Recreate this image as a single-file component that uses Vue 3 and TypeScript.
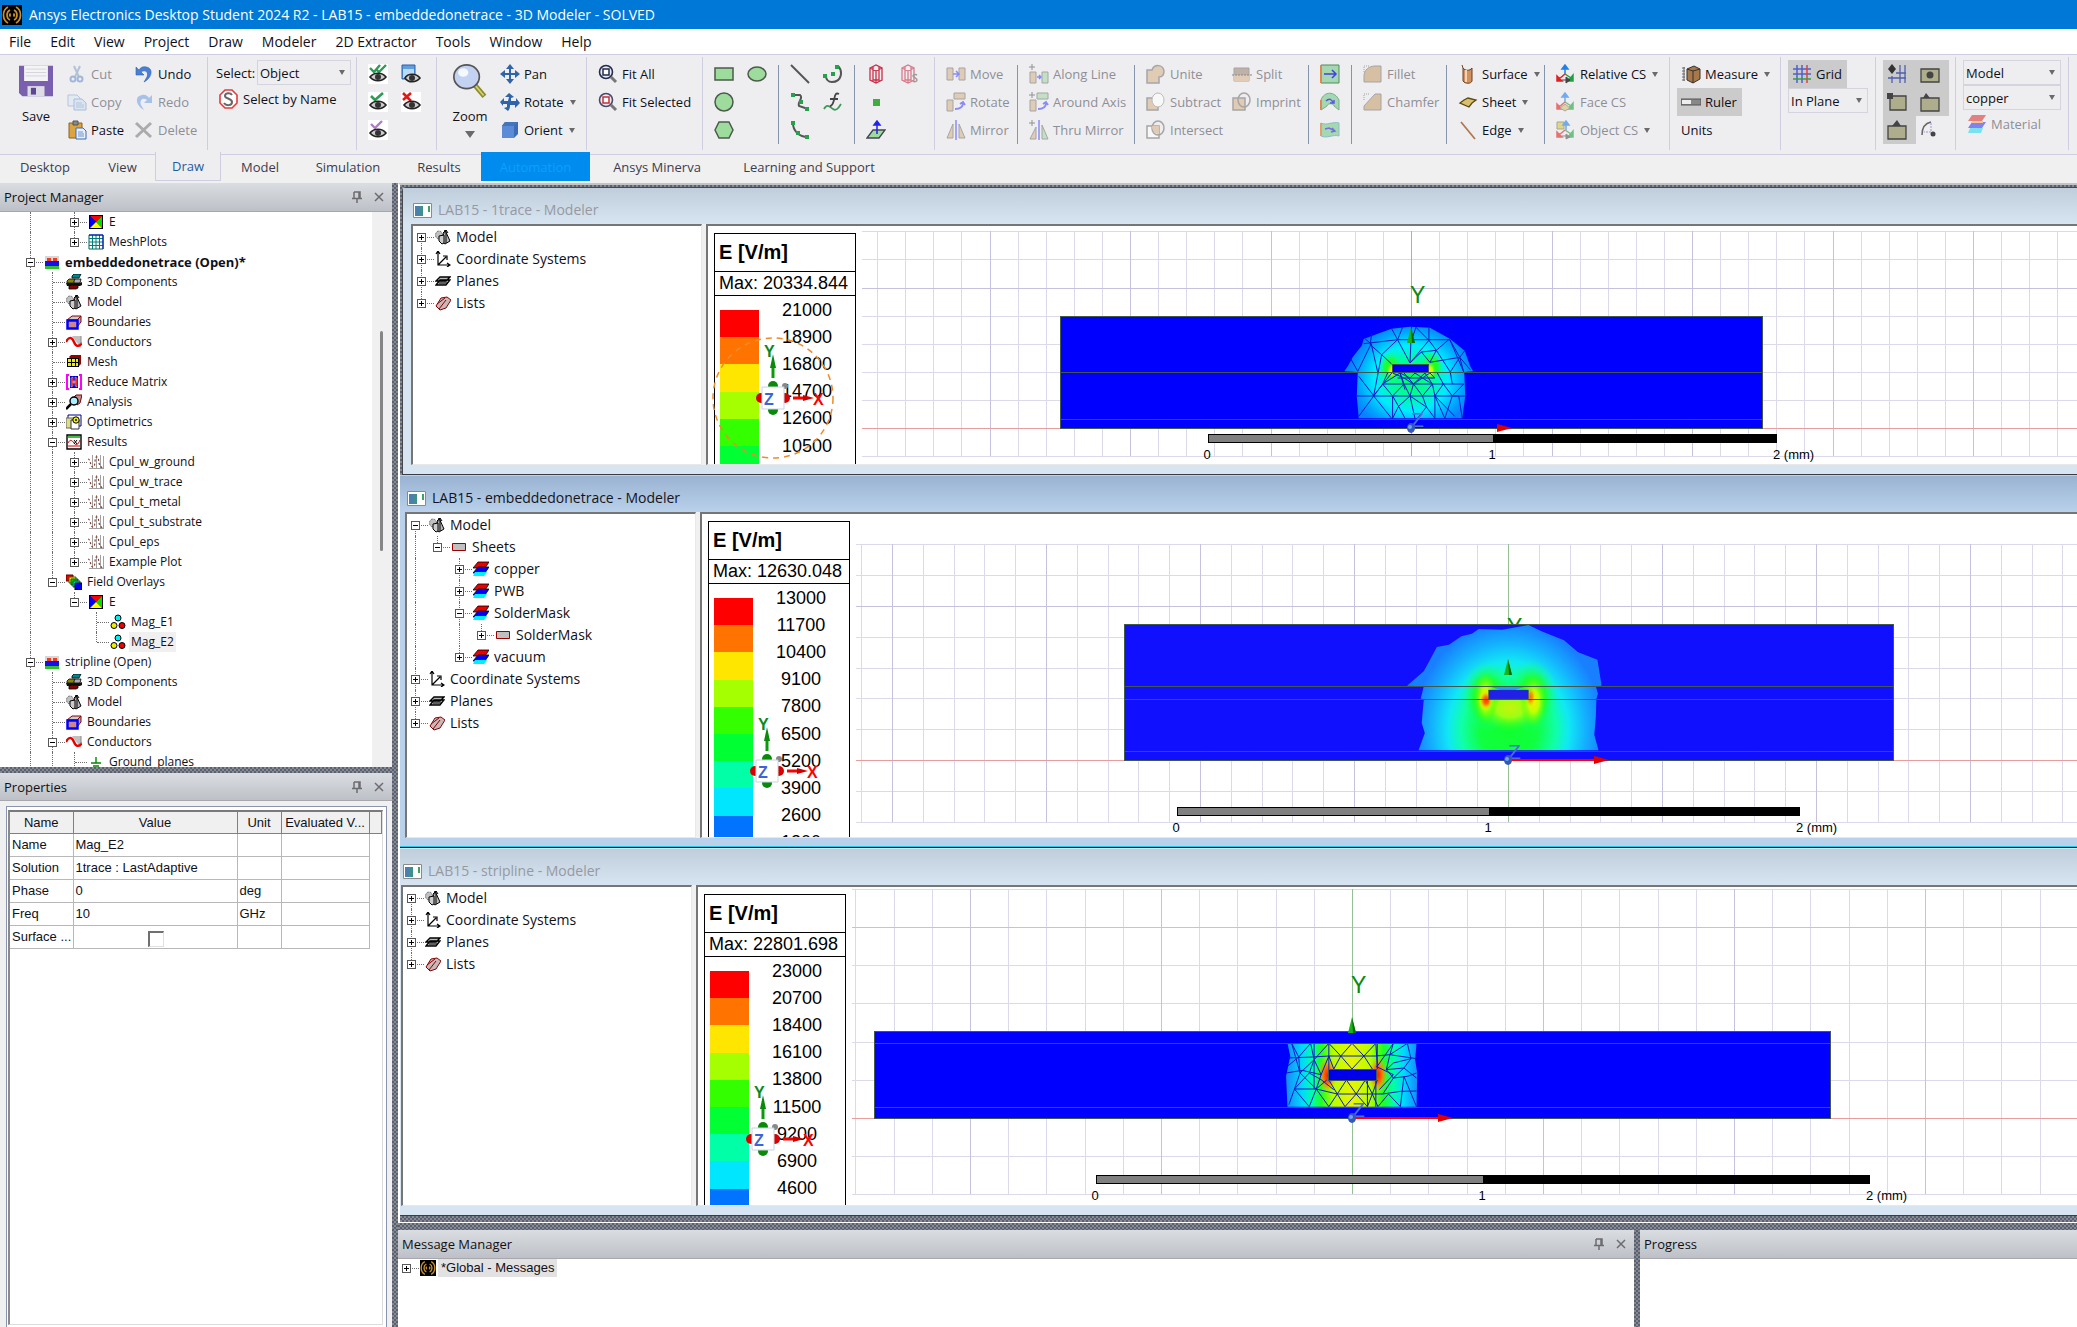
<script setup lang="ts">
type Tool = { icon: string; label?: string; off?: boolean; caret?: boolean; on?: boolean; name?: string }
type Row = { guides: string; box?: string; icon: string; label: string; bold?: boolean; sel?: boolean }
type View = {
  id: string; title: string; max: string; scale: number[]; rows: Row[]
  ox: number; oy: number; pitch: number; left: number; up: number; down: number
  ruler: number[]; rulerY: number; hover?: boolean; shaft?: boolean
}

const menus = ['File', 'Edit', 'View', 'Project', 'Draw', 'Modeler', '2D Extractor', 'Tools', 'Window', 'Help']
const tabs = [
  { label: 'Desktop', w: 90 }, { label: 'View', w: 65 }, { label: 'Draw', w: 66 }, { label: 'Model', w: 78 },
  { label: 'Simulation', w: 98 }, { label: 'Results', w: 84 }, { label: 'Automation', w: 109 },
  { label: 'Ansys Minerva', w: 134 }, { label: 'Learning and Support', w: 170 },
]

const icons: Record<string, string> = {
  save: '<path d="M0 1h20v18H2l-2-2z" fill="#7a5fae"/><path d="M3 1h14v9H3z" fill="#f4f4f6"/><path d="M4 3h12M4 5h12M4 7h12" stroke="#cfcfd6" stroke-width=".5"/><path d="M5 13h10v6H5z" fill="#dcdce4"/><path d="M7 14h3v4H7z" fill="#5d4790"/>',
  cut: '<path d="M7 2l5 11M13 2L8 13" stroke="#8ea6c8" stroke-width="2" fill="none"/><circle cx="6" cy="15" r="2.5" fill="none" stroke="#6f93cc" stroke-width="2"/><circle cx="13" cy="15" r="2.5" fill="none" stroke="#6f93cc" stroke-width="2"/>',
  copy: '<path d="M1 3h9l3 3v8H1z" fill="#dfe8f4" stroke="#8eaad0"/><path d="M7 7h8l4 4v7H7z" fill="#cfdef2" stroke="#7c9ccb"/><path d="M9 11h6M9 13h8M9 15h8" stroke="#8eaad0"/>',
  paste: '<path d="M2 3h13v15H2z" fill="#d9a441" stroke="#8c6420"/><path d="M6 1h5v4H6z" fill="#8a8a8a" stroke="#555"/><path d="M9 8h7l3 3v8H9z" fill="#e8f0fa" stroke="#3f6bb0"/><path d="M11 12h5M11 14h6M11 16h6" stroke="#6f93cc"/>',
  undo: '<path d="M2 3v8h8L7 8c4-3 8 0 6 5l-3 5c8-4 10-14 2-15C9 2 6 4 5 6z" fill="#4a80d4" stroke="#2c5eb4" stroke-width=".6"/>',
  redo: '<path d="M18 3v8h-8l3-3C9 5 5 8 7 13l3 5C2 14 0 4 8 3c3-1 6 1 7 3z" fill="#7ba4e4"/>',
  del: '<path d="M2 3l15 14M17 3L2 17" stroke="#808080" stroke-width="3"/>',
  byname: '<path d="M6 1h7l5 5v8l-5 5H6l-5-5V6z" fill="#fff" stroke="#e23c3c" stroke-width="1.6"/><path d="M13 6c-2-3-7-2-7 1s7 2 7 6-6 4-8 1" fill="none" stroke="#666" stroke-width="2"/>',
  eyeall: '<rect width="20" height="20" fill="#fff"/><path d="M2 4l4 4 6-7M8 5l3 3 7-7" fill="none" stroke="#2d9a56" stroke-width="2.4"/><path d="M2 13c4-5 12-5 16 0-4 5-12 5-16 0z" fill="#ccc" stroke="#222" stroke-width="1.600"/><circle cx="10" cy="13" r="3" fill="#333"/>',
  eyewin: '<path d="M1 1h13v14H1z" fill="#5f9fe0" stroke="#2b5ea8"/><path d="M2 5h11v9H2z" fill="#bcd9f6"/><path d="M4 14c3-5 11-5 15 0-4 5-12 5-15 0z" fill="#ccc" stroke="#222" stroke-width="1.600"/><circle cx="11" cy="14" r="3" fill="#333"/>',
  eyeon: '<rect width="20" height="20" fill="#fff"/><path d="M3 4l4 4 8-7" fill="none" stroke="#2d9a56" stroke-width="2.6"/><path d="M2 13c4-5 12-5 16 0-4 5-12 5-16 0z" fill="#ccc" stroke="#222" stroke-width="1.600"/><circle cx="10" cy="13" r="3" fill="#333"/>',
  eyeoff: '<rect width="20" height="20" fill="#fff"/><path d="M2 1l8 8M10 1L2 8" fill="none" stroke="#e01818" stroke-width="2.6"/><path d="M3 13c4-5 12-5 16 0-4 5-12 5-16 0z" fill="#ccc" stroke="#222" stroke-width="1.600"/><circle cx="11" cy="13" r="3" fill="#333"/>',
  eyetmp: '<rect width="20" height="20" fill="#fff"/><path d="M3 4l4 4 7-7" fill="none" stroke="#b07cc8" stroke-width="2.4"/><path d="M2 13c4-5 12-5 16 0-4 5-12 5-16 0z" fill="#ccc" stroke="#222" stroke-width="1.600"/><circle cx="10" cy="13" r="3" fill="#333"/>',
  zoom: '<path d="M12.5 12l6 7" stroke="#8c8a30" stroke-width="3"/><path d="M13 12.500l5 6" stroke="#d8d470" stroke-width="1"/><ellipse cx="8" cy="7.500" rx="7.500" ry="7" fill="#c4d2f2" stroke="#555" stroke-width="1"/><ellipse cx="6" cy="5" rx="3" ry="2.500" fill="#f4f8ff"/>',
  pan: '<path d="M10 0l4 5h-3v4h4V6l5 4-5 4v-3h-4v4h3l-4 5-4-5h3v-4H5v3l-5-4 5-4v3h4V5H6z" fill="#2f64a8"/>',
  rotate: '<path d="M9 1l5 4-3 1v3l5 0V6l4 5-5 5v-3h-5c0 2 0 4-2 6l-4-3 3-1 0-3H3v2l-3-4 4-4v3h4l1-4-4 0z" fill="#2f64a8"/>',
  orient: '<path d="M2 6l3-4h13v12l-4 4H2z" fill="#3c6cb8"/><path d="M2 6h12v12H2z" fill="#5b8ad6"/><path d="M2 6l3-4h13l-4 4z" fill="#4474bc"/>',
  fitall: '<circle cx="8" cy="8" r="6.500" fill="#e8ecf8" stroke="#222b4a" stroke-width="1.600"/><rect x="5" y="5" width="6" height="6" fill="#fff" stroke="#222b4a" stroke-width="1.500"/><path d="M13 13l5 5" stroke="#777" stroke-width="3"/>',
  fitsel: '<circle cx="8" cy="8" r="6.500" fill="#f8e8e8" stroke="#444b6a" stroke-width="1.600"/><rect x="5" y="5" width="6" height="6" fill="#fff" stroke="#c03040" stroke-width="1.500"/><path d="M13 13l5 5" stroke="#777" stroke-width="3"/>',
  rect: '<rect x="1" y="4" width="18" height="12" fill="#9edc9e" stroke="#4c5a4c" stroke-width="1.500"/>',
  ellipse: '<ellipse cx="10" cy="10" rx="9" ry="7" fill="#9edc9e" stroke="#4c5a4c" stroke-width="1.500"/>',
  circle: '<circle cx="10" cy="10" r="9" fill="#9edc9e" stroke="#4c5a4c" stroke-width="1.500"/>',
  hexagon: '<path d="M5 2h10l4 8-4 8H5L1 10z" fill="#9edc9e" stroke="#4c5a4c" stroke-width="1.500"/>',
  line: '<path d="M1 1l18 18" stroke="#555" stroke-width="2"/>',
  arc: '<path d="M15 2c5 5 4 16-6 16-4 0-6-3-6-6" fill="none" stroke="#555" stroke-width="2"/><path d="M8 8h4v4H8zM12 1h4v4h-4zM0 10h4v4H0z" fill="#25a04c"/>',
  spline: '<path d="M3 3h7c4 3-3 7-1 11l9 3" fill="none" stroke="#555" stroke-width="2"/><path d="M1 1h4v4H1zM9 8h4v4H9zM15 15h4v4h-4z" fill="#25a04c"/>',
  eqn: '<path d="M1 17c3-6 6-2 9 0s5 0 8-5" fill="none" stroke="#3f9a5a" stroke-width="1.800"/><path d="M16 2c-4-2-4 2-5 6s-2 6-4 6M7 7h8" fill="none" stroke="#444" stroke-width="1.800"/>',
  arc3: '<path d="M3 3c0 8 6 14 15 14" fill="none" stroke="#555" stroke-width="2"/><path d="M1 1h4v4H1zM6 11h4v4H6zM15 15h4v4h-4z" fill="#25a04c"/>',
  prism: '<path d="M4 4l6-3 6 3v12l-6 3-6-3zM4 4l6 3 6-3M10 7v12M7 2v14h6V2" fill="none" stroke="#c83048" stroke-width="1.300"/>',
  prisms: '<path d="M3 4l6-3 6 3v12l-6 3-6-3zM3 4l6 3 6-3M9 7v12M6 2v14h6V2" fill="none" stroke="#c83048" stroke-width="1.300"/><path d="M18 11c-2-1-4 0-4 1s4 2 4 4-3 2-4 1" fill="none" stroke="#666" stroke-width="1.500"/>',
  point: '<path d="M7 7h7v7H7z" fill="#3fae3f"/>',
  plane: '<path d="M1 18l6-8h12l-6 8z" fill="#9edc9e" stroke="#445" stroke-width="1.300"/><path d="M11 14V3M8 5l3-4 3 4z" stroke="#2222ee" stroke-width="1.500" fill="#2222ee"/>',
  move: '<path d="M1 4h6v12H1zM13 4h6v12h-6z" fill="#d8b48c" stroke="#777"/><path d="M7 10h5M10 7l3 3-3 3" stroke="#4848ff" fill="none" stroke-width="1.500"/>',
  rot: '<path d="M1 8h6v11H1zM8 1h11v6H8z" fill="#d8b48c" stroke="#777"/><path d="M9 17c6 0 8-3 8-6M14 12l3-2 2 3" stroke="#4848ff" fill="none" stroke-width="1.800"/>',
  mirror: '<path d="M1 18L7 4v14zM19 18L13 4v14z" fill="#d8b48c" stroke="#777"/><path d="M10 0v20" stroke="#4848ff" stroke-width="1.500"/>',
  along: '<path d="M1 8h6v11H1z" fill="#d8b48c" stroke="#777"/><path d="M13 8h6v11h-6z" fill="#a5d8a5" stroke="#777"/><path d="M8 13h4M10 11l2 2-2 2" stroke="#4848ff" fill="none" stroke-width="1.500"/><path d="M0 3h6M3 0v6" stroke="#555"/>',
  around: '<path d="M1 8h6v11H1z" fill="#d8b48c" stroke="#777"/><path d="M8 1h11v6H8z" fill="#a5d8a5" stroke="#777"/><path d="M9 17c6 0 8-3 8-6M14 12l3-2 2 3" stroke="#4848ff" fill="none" stroke-width="1.800"/><path d="M0 3h6M3 0v6" stroke="#555"/>',
  thru: '<path d="M1 19L7 7v12z" fill="#d8b48c" stroke="#777"/><path d="M19 19L13 5v14z" fill="#a5d8a5" stroke="#777"/><path d="M10 0v20" stroke="#4848ff" stroke-width="1.500"/><path d="M0 3h6M3 0v6" stroke="#555"/>',
  unite: '<path d="M1 6h5c2-6 11-6 12 1 0 4-2 6-5 6v6H1z" fill="#d8b48c" stroke="#777" stroke-width="1.500"/>',
  subtract: '<path d="M1 6h11v12H1z" fill="#d8b48c" stroke="#777" stroke-width="1.500"/><ellipse cx="12" cy="8" rx="6" ry="7" fill="#fff" stroke="#999"/>',
  intersect: '<path d="M1 6h12v12H1z" fill="#fff" stroke="#777" stroke-width="1.500"/><ellipse cx="12" cy="8" rx="6" ry="7" fill="none" stroke="#777" stroke-width="1.500"/><path d="M6 6h7v8c-5 0-7-4-7-8z" fill="#d8b48c"/>',
  split: '<path d="M2 4h15v13H2z" fill="#a08878" stroke="#777"/><path d="M2 11h15v6H2z" fill="#d8b48c"/><path d="M0 11h20" stroke="#444" stroke-dasharray="2 1"/>',
  imprint: '<path d="M1 6h12v12H1z" fill="#d8b48c" stroke="#777" stroke-width="1.500"/><ellipse cx="12" cy="8" rx="6" ry="7" fill="none" stroke="#777" stroke-width="1.500"/>',
  sweep1: '<path d="M1 1h18v18H1z" fill="#a5d8b0" stroke="#4c8c5c"/><path d="M1 1v18" stroke="#e08850" stroke-width="2"/><path d="M4 10h11M12 6l4 4-4 4" stroke="#4040e0" fill="none" stroke-width="1.500"/>',
  sweep2: '<path d="M1 18V8c3-9 14-9 18 0v10l-5-4c0-3-7-3-7 0z" fill="#a5d8b0" stroke="#7cac8c"/><path d="M1 18V8" stroke="#e08850" stroke-width="2"/><path d="M6 9c3-3 6-2 7 2M10 11h4V8" stroke="#5858e0" fill="none" stroke-width="1.500"/>',
  sweep3: '<path d="M1 3c6 3 12-2 18 0v13c-6-2-12 3-18 0z" fill="#a5d8b0" stroke="#8cbccc"/><path d="M1 3v13" stroke="#e0a070" stroke-width="2"/><path d="M5 9l4-1 6 3M12 8l3 3-4 1" stroke="#7070e0" fill="none" stroke-width="1.500"/>',
  fillet: '<path d="M1 18V12C1 6 6 2 12 2h6v16z" fill="#c8a070" stroke="#777"/><path d="M1 8V2h6" stroke="#777" fill="none" stroke-dasharray="1 1"/>',
  chamfer: '<path d="M1 18V14L12 2h6v16z" fill="#c8a070" stroke="#777"/><path d="M1 8V2h6" stroke="#777" fill="none" stroke-dasharray="1 1"/>',
  surface: '<path d="M5 4l-1-3M5 4v13c2 3 8 3 9 0V4c-2 3-7 3-9 0z" fill="#d09060" stroke="#6a4020"/><path d="M8 6v12" stroke="#f4d4b4" stroke-width="2"/>',
  sheet: '<path d="M2 11l4-3 4-2 8 2-4 3-3 4z" fill="#d8c070" stroke="#5a4a10" stroke-width="1.300"/>',
  edge: '<path d="M3 2l14 17" stroke="#b07850" stroke-width="1.800"/>',
  cs: '<path d="M9 10V3M6 5l3-4 3 4z" stroke="#2080e8" fill="#2080e8" stroke-width="1.500"/><path d="M9 10l-6 5M1 12v5h5z" stroke="#e02020" fill="#e02020" stroke-width="1.500"/><path d="M9 10l6 4M17 11v6h-5z" stroke="#20a040" fill="#20a040" stroke-width="1.500"/><path d="M6 16h6M10 13l4 3-4 3z" stroke="#444" fill="#444"/>',
  facecs: '<path d="M9 10V3M6 5l3-4 3 4z" stroke="#2080e8" fill="#2080e8" stroke-width="1.500"/><path d="M9 10l-6 5M1 12v5h5z" stroke="#e02020" fill="#e02020" stroke-width="1.500"/><path d="M9 10l6 4M17 11v6h-5z" stroke="#20a040" fill="#20a040" stroke-width="1.500"/><path d="M4 16l5-4 5 4-5 3z" fill="#d8c070" stroke="#776"/>',
  objcs: '<path d="M1 2h7v7H1z" fill="#d8c840" stroke="#776"/><path d="M10 10V3M7 5l3-4 3 4z" stroke="#2080e8" fill="#2080e8" stroke-width="1.500"/><path d="M9 10l-6 5M1 12v5h5z" stroke="#e02020" fill="#e02020" stroke-width="1.500"/><path d="M9 10l6 4M17 11v6h-5z" stroke="#20a040" fill="#20a040" stroke-width="1.500"/><path d="M6 16h6M10 14l4 3-4 2z" stroke="#555" fill="#555"/>',
  measure: '<path d="M6 5l7-3 6 3v10l-7 4-6-3z" fill="#a87848" stroke="#333"/><path d="M6 5l6 2 7-2M12 7v12" stroke="#333" fill="none"/><path d="M3 3v14M1 4h3M1 7h3M1 10h3M1 13h3M1 16h3" stroke="#666"/>',
  ruler: '<path d="M0 7h20v6H0z" fill="#888" stroke="#555"/><path d="M1 8h9v4H1z" fill="#eee"/>',
  grid: '<path d="M5 1v18M10 1v18M1 5h18M1 10h18" stroke="#5060d0" stroke-width="1.500"/><path d="M15 1v18" stroke="#e04040" stroke-width="1.500"/><path d="M1 15h18" stroke="#30a040" stroke-width="1.500"/>',
  snapgrid: '<path d="M13 1v18M18 1v18M1 14h18M9 9h10M5 12v7" stroke="#5060b0" stroke-width="1.300" fill="none"/><path d="M5 0l4 5-4 5-4-5z" fill="#333"/>',
  snapc: '<path d="M1 5h18v13H1z" fill="#aeae8c" stroke="#444" stroke-width="1.300"/><circle cx="10" cy="11" r="3.500" fill="#444"/>',
  snapv: '<path d="M3 4h16v14H3z" fill="#aeae8c" stroke="#444" stroke-width="1.300"/><path d="M0 1h6v6H0z" fill="#444"/>',
  snape: '<path d="M1 6h18v13H1z" fill="#aeae8c" stroke="#444" stroke-width="1.300"/><path d="M3 6l3-5 4 5z" fill="#444"/>',
  snapm: '<path d="M1 6h18v13H1z" fill="#aeae8c" stroke="#444" stroke-width="1.300"/><path d="M5 6l5-6 4 6z" fill="#444"/>',
  snapq: '<path d="M2 15C2 7 6 3 11 2" fill="none" stroke="#666" stroke-width="1.500"/><path d="M11 3v9H4" fill="none" stroke="#99c" stroke-dasharray="2 1"/><circle cx="13" cy="14" r="2.500" fill="#444"/>',
  material: '<path d="M5 1h14l-4 6H1z" fill="#e03838"/><path d="M5 8h14l-4 6H1z" fill="#3a3af0"/><path d="M3 14h13l-2 5H1z" fill="#30d8f0"/><path d="M5 8h11" stroke="#e8b060" stroke-width="2"/>',
  app: '<rect width="20" height="20" fill="#000"/><path d="M6 2C0 5 0 15 6 18M8 5C4 7 4 13 8 15M8.500 8.500c-1 1-1 2 0 3M14 2c6 3 6 13 0 16M12 5c4 2 4 8 0 10M11.500 8.500c1 1 1 2 0 3" fill="none" stroke="#c8902c" stroke-width="1.700"/>',
  // 16-unit tree glyphs
  tE: '<path d="M1 1h14v14H1z" fill="#000"/><path d="M2 2h12L8 8z" fill="#f00"/><path d="M2 2v12l6-6z" fill="#00f"/><path d="M14 2v12L8 8z" fill="#0d0"/><path d="M2 14h12L8 8z" fill="#ff0"/>',
  tMesh: '<path d="M1 1h14v14H1z" fill="#fff" stroke="#006060"/><path d="M4.500 1v14M8 1v14M11.500 1v14M1 4.500h14M1 8h14M1 11.500h14" stroke="#007c7c"/><path d="M1 1h14v14" fill="none" stroke="#00c"/>',
  tDesign: '<path d="M1 2h14v12H1z" fill="#d8d8d8"/><path d="M3 4h4v4H3zM9 4h4v4H9z" fill="#f43c1c"/><path d="M1 7h14v5H1z" fill="#1010f0"/><path d="M1 12h14v3H1z" fill="#30c030"/>',
  tComp: '<path d="M6 2l2-2h7l-2 4H6z" fill="#088" stroke="#000" stroke-width=".8"/><path d="M1 7l2-2h6v4H1z" fill="#880" stroke="#000" stroke-width=".8"/><path d="M8 7l1-2h6l-1 4H8z" fill="#aaa" stroke="#000" stroke-width=".8"/><path d="M0 9h14l2-1v3l-2 1H1z" fill="#111"/><path d="M3 12l2-1h7v3l-2 1H3z" fill="#800" stroke="#000" stroke-width=".8"/>',
  tModel: '<ellipse cx="4" cy="6" rx="3.500" ry="4" fill="#c0c0c0" stroke="#555" stroke-width=".8" stroke-dasharray="2 1"/><path d="M10 1l5 11-5 3-4-3z" fill="#b8b8b8" stroke="#000" stroke-width="1"/><path d="M4 7l5-1v8l-2 1-3-3z" fill="#ccc" stroke="#000"/><path d="M11 1v13M8 4l3-3 2 3" stroke="#000" fill="none"/>',
  tBound: '<path d="M1 6l5-4h9l-4 4z" fill="#ccc" stroke="#800"/><path d="M11 6l4-4v6l-4 5z" fill="#aaa" stroke="#800"/><path d="M1.500 6.500h10v8h-10z" fill="#c88" stroke="#00f" stroke-width="2.500"/>',
  tCond: '<path d="M6 2h9v12z" fill="#c0c0c0"/><path d="M0 8c3-6 6-5 8 0s5 5 8 1" fill="none" stroke="#e80000" stroke-width="2.400"/><path d="M15 2v8" stroke="#888"/>',
  tMeshOp: '<path d="M3 3l2-2h10v9l-3 3z" fill="#900"/><path d="M1 4h12v9H1z" fill="#000"/><path d="M2 5h3v3H2zM6 5h3v3H6zM10 5h2v3h-2zM2 9h3v3H2zM6 9h3v3H6zM10 9h2v3h-2z" fill="#ee0"/>',
  tReduce: '<path d="M3 1H1v14h2M13 1h2v14h-2" fill="none" stroke="#f0f" stroke-width="2"/><path d="M4 2h8v12H4z" fill="#00c"/><path d="M5 4l2-1v9l-2 1zM11 4L9 3v9l2 1zM7 7h2v2H7z" fill="#e00" stroke="#fff" stroke-width=".4"/>',
  tAnalysis: '<path d="M7 4l3-3h6l-2 8-3 2z" fill="#c89090" stroke="#700"/><circle cx="8" cy="7" r="4" fill="#aef" stroke="#000" stroke-width="1.400"/><path d="M5 10l-5 5" stroke="#000" stroke-width="2.500"/>',
  tOpti: '<path d="M2 1h13v11H2z" fill="#fff" stroke="#008"/><path d="M0 4h8v10H0z" fill="#dd8" stroke="#666"/><path d="M5 6h8v9H5z" fill="#fff" stroke="#333"/><circle cx="10" cy="6" r="3.200" fill="#ee0" stroke="#000"/><circle cx="10" cy="6" r="1" fill="#000"/>',
  tResult: '<path d="M1 1h14v14H1z" fill="#fff" stroke="#000" stroke-width="1.400"/><path d="M2 3h12" stroke="#0a0" stroke-width="1.500"/><path d="M2 9c2-4 4-3 6 0s4 2 6-3M2 12h12" fill="none" stroke="#c00"/><path d="M8 6l3 4M11 6L8 10" stroke="#000"/>',
  tPlot: '<path d="M4.500 1v14M8.500 1v14M12.500 1v14M15.500 2v13M1 14.500h14" stroke="#a0a0a0"/><path d="M0 5c3 0 2 8 5 8s1-11 4-10 0 9 6 11" fill="none" stroke="#884030" stroke-width="1.200" stroke-dasharray="2 2"/>',
  tField: '<path d="M0 1h7v6H0z" fill="#e00" stroke="#600"/><path d="M3 3h7v6H3z" fill="#ee0" stroke="#550"/><path d="M5 5h7v6H5z" fill="#0c0" stroke="#050"/><path d="M7 7h7v6H7z" fill="#0cc" stroke="#055"/><path d="M9 9h7v7H9z" fill="#00e" stroke="#000"/>',
  tMag: '<circle cx="8" cy="4" r="3" fill="#0ee" stroke="#000"/><circle cx="4" cy="11.500" r="3" fill="#ee0" stroke="#000"/><circle cx="12" cy="11.500" r="3" fill="#e00" stroke="#000"/>',
  tGround: '<path d="M8 3v6M3 9h10M5 12h6M7 15h2" stroke="#080" stroke-width="1.400" fill="none"/>',
  tSheet: '<path d="M1.500 4.500h13v7h-13z" fill="#c0c0c0" stroke="#900"/>',
  tMat: '<path d="M5 1h11l-4 6H0z" fill="#e00" stroke="#000" stroke-width=".8"/><path d="M5 6h11l-4 6H0z" fill="#00f" stroke="#000" stroke-width=".8"/><path d="M2 11h12l-3 4H0z" fill="#0ef"/>',
  tCoord: '<path d="M3 1v13h11M3 14l8-8M1 3l2-3 2 3M12 12l3 2-3 2M8 5h4v4" fill="none" stroke="#000" stroke-width="1.200"/>',
  tPlane: '<path d="M1 8l4-4h10l-4 4zM1 12l4-5h10l-4 5z" fill="#bbb" stroke="#000" stroke-width="1.300"/><path d="M4 10h9" stroke="#000"/>',
  tList: '<path d="M1 11l5-8 6-1 4 3-5 8-6 2z" fill="#c8b8b8" stroke="#800"/><path d="M4 14l7-9M2 9l8-6" stroke="#800" fill="none"/>',
}

type Col = { sep?: string; size: string; tools: Tool[] }
const t = (icon: string, label?: string, extra: Partial<Tool> = {}): Tool => ({ icon, label, ...extra })
const off = { off: true }
const drop = { caret: true }
const colsEdit: Col[] = [
  { size: 'w67', tools: [t('cut', 'Cut', off), t('copy', 'Copy', off), t('paste', 'Paste')] },
  { size: 'w73', tools: [t('undo', 'Undo'), t('redo', 'Redo', off), t('del', 'Delete', off)] },
]
const colsView: Col[] = [
  { size: 'w86', tools: [t('pan', 'Pan'), t('rotate', 'Rotate', drop), t('orient', 'Orient', drop)] },
  { sep: 'light', size: 'w116', tools: [t('fitall', 'Fit All'), t('fitsel', 'Fit Selected')] },
]
const pads = [
  { sep: 'light', size: 'w76', tools: ['rect', 'ellipse', 'circle', '', 'hexagon'] },
  { sep: 'dark', size: 'w76', tools: ['line', 'arc', 'spline', 'eqn', 'arc3'] },
  { sep: 'dark', size: 'w80', tools: ['prism', 'prisms', 'point', '', 'plane'] },
]
const colsModel: Col[] = [
  { sep: 'light', size: 'w83', tools: [t('move', 'Move', off), t('rot', 'Rotate', off), t('mirror', 'Mirror', off)] },
  { sep: 'dark', size: 'w117', tools: [t('along', 'Along Line', off), t('around', 'Around Axis', off), t('thru', 'Thru Mirror', off)] },
  { sep: 'dark', size: 'w98', tools: [t('unite', 'Unite', off), t('subtract', 'Subtract', off), t('intersect', 'Intersect', off)] },
  { size: 'w76', tools: [t('split', 'Split', off), t('imprint', 'Imprint', off)] },
  { sep: 'dark', size: 'w43', tools: [t('sweep1', '', { name: 'Sweep along vector' }), t('sweep2', '', { name: 'Sweep around axis' }), t('sweep3', '', { name: 'Sweep along path' })] },
  { sep: 'dark', size: 'w95', tools: [t('fillet', 'Fillet', off), t('chamfer', 'Chamfer', off)] },
  { sep: 'dark', size: 'w98', tools: [t('surface', 'Surface', drop), t('sheet', 'Sheet', drop), t('edge', 'Edge', drop)] },
  { sep: 'dark', size: 'w125', tools: [t('cs', 'Relative CS', drop), t('facecs', 'Face CS', off), t('objcs', 'Object CS', { off: true, caret: true })] },
  { sep: 'light', size: 'w111', tools: [t('measure', 'Measure', drop), t('ruler', 'Ruler', { on: true }), t('', 'Units')] },
]
const snaps = [['snapgrid', 1], ['snapc', 1], ['snapv', 1], ['snape', 1], ['snapm', 1], ['snapq', 0]] as [string, number][]

const r = (guides: string, box: string, icon: string, label: string, extra: Partial<Row> = {}): Row => ({ guides, box, icon, label, ...extra })
// guides: one letter per level. f = full line, h = upper half, b = lower half, n = none
const project: Row[] = [
  r('fnf', '+', 'tE', 'E'), r('fnh', '+', 'tMesh', 'MeshPlots'),
  r('f', '-', 'tDesign', 'embeddedonetrace (Open)*', { bold: true }),
  r('ff', '', 'tComp', '3D Components'), r('ff', '', 'tModel', 'Model'), r('ff', '', 'tBound', 'Boundaries'),
  r('ff', '+', 'tCond', 'Conductors'), r('ff', '', 'tMeshOp', 'Mesh'), r('ff', '+', 'tReduce', 'Reduce Matrix'),
  r('ff', '+', 'tAnalysis', 'Analysis'), r('ff', '+', 'tOpti', 'Optimetrics'), r('ff', '-', 'tResult', 'Results'),
  r('fff', '+', 'tPlot', 'Cpul_w_ground'), r('fff', '+', 'tPlot', 'Cpul_w_trace'), r('fff', '+', 'tPlot', 'Cpul_t_metal'),
  r('fff', '+', 'tPlot', 'Cpul_t_substrate'), r('fff', '+', 'tPlot', 'Cpul_eps'), r('ffh', '+', 'tPlot', 'Example Plot'),
  r('fh', '-', 'tField', 'Field Overlays'), r('fnh', '-', 'tE', 'E'),
  r('fnnf', '', 'tMag', 'Mag_E1'), r('fnnh', '', 'tMag', 'Mag_E2', { sel: true }),
  r('f', '-', 'tDesign', 'stripline (Open)'),
  r('ff', '', 'tComp', '3D Components'), r('ff', '', 'tModel', 'Model'), r('ff', '', 'tBound', 'Boundaries'),
  r('ff', '-', 'tCond', 'Conductors'), r('fff', '', 'tGround', 'Ground_planes'),
]
const tail: Row[] = [r('f', '+', 'tCoord', 'Coordinate Systems'), r('f', '+', 'tPlane', 'Planes'), r('h', '+', 'tList', 'Lists')]
const closed: Row[] = [r('b', '+', 'tModel', 'Model'), ...tail]
const opened: Row[] = [
  r('b', '-', 'tModel', 'Model'), r('fh', '-', 'tSheet', 'Sheets'), r('fnf', '+', 'tMat', 'copper'), r('fnf', '+', 'tMat', 'PWB'),
  r('fnf', '-', 'tMat', 'SolderMask'), r('fnfh', '+', 'tSheet', 'SolderMask'), r('fnh', '+', 'tMat', 'vacuum'), ...tail,
]

const steps = (top: number) => Array.from({ length: 11 }, (_, i) => Math.round((top * (10 - i)) / 10))
const views: View[] = [
  { id: 'a', title: 'LAB15 - 1trace - Modeler', max: '20334.844', scale: steps(21000), rows: closed, ox: 703, oy: 202, pitch: 28.1, left: -549, up: 7, down: 1, ruler: [-203, 82, 366], rulerY: 6, hover: true },
  { id: 'b', title: 'LAB15 - embeddedonetrace - Modeler', max: '12630.048', scale: steps(13000), rows: opened, ox: 806, oy: 246, pitch: 30.8, left: -652, up: 7, down: 2, ruler: [-331, -19, 292], rulerY: 47, shaft: true },
  { id: 'c', title: 'LAB15 - stripline - Modeler', max: '22801.698', scale: steps(23000), rows: closed, ox: 654, oy: 231, pitch: 38.2, left: -500, up: 6, down: 2, ruler: [-256, 131, 518], rulerY: 57, shaft: true },
]
const bands = ['#f00', '#ff7300', '#ffe600', '#a6ff00', '#33ff00', '#00ff33', '#00ffa6', '#00e6ff', '#0073ff', '#0000ff']

function gridPath(v: View, strong: boolean): string {
  const top = Math.round(-v.up * v.pitch)
  const bottom = Math.round(v.down * v.pitch)
  let d = ''
  for (let i = Math.ceil(v.left / v.pitch); i * v.pitch < 2400; i++) {
    if (i !== 0 && (i % 5 === 0) === strong) d += `M${Math.round(i * v.pitch)} ${top}V${bottom}`
  }
  for (let j = -v.up; j <= v.down; j++) {
    if (j !== 0 && (j % 5 === 0) === strong) d += `M${v.left} ${Math.round(j * v.pitch)}H2400`
  }
  return d
}

const props = [
  ['Name', 'Mag_E2', ''], ['Solution', '1trace : LastAdaptive', ''], ['Phase', '0', 'deg'], ['Freq', '10', 'GHz'], ['Surface ...', null, ''],
]
</script>

<template>
  <div class="shell">
    <header class="titlebar">
      <svg class="i20" viewBox="0 0 20 20" v-html="icons.app"></svg>
      <span>Ansys Electronics Desktop Student 2024 R2 - LAB15 - embeddedonetrace - 3D Modeler - SOLVED</span>
    </header>
    <nav class="menubar">
      <button v-for="m in menus" :key="m" type="button">{{ m }}</button>
    </nav>

    <section class="ribbon">
      <div class="big save">
        <button type="button"><svg class="i34" viewBox="0 0 20 20" v-html="icons.save"></svg><span>Save</span></button>
      </div>
      <div v-for="(c, i) in colsEdit" :key="'e' + i" class="col" :class="c.size">
        <button v-for="b in c.tools" :key="b.icon" type="button" class="tool" :class="{ off: b.off }">
          <svg class="i20" viewBox="0 0 20 20" v-html="icons[b.icon]"></svg><span>{{ b.label }}</span>
        </button>
      </div>
      <div class="col light w149">
        <div class="pick">
          <label for="selmode">Select:</label>
          <span class="drop w92"><select id="selmode"><option>Object</option></select><i class="caret"></i></span>
        </div>
        <button type="button" class="tool"><svg class="i20" viewBox="0 0 20 20" v-html="icons.byname"></svg><span>Select by Name</span></button>
      </div>
      <div class="col pad light w80">
        <button v-for="k in ['eyeall', 'eyewin', 'eyeon', 'eyeoff', 'eyetmp']" :key="k" type="button" :aria-label="k" class="tool">
          <svg class="i20" viewBox="0 0 20 20" v-html="icons[k]"></svg>
        </button>
      </div>
      <div class="big light w64">
        <button type="button"><svg class="i34" viewBox="0 0 20 20" v-html="icons.zoom"></svg><span>Zoom</span><i class="caret wide"></i></button>
      </div>
      <div v-for="(c, i) in colsView" :key="'v' + i" class="col" :class="[c.size, c.sep]">
        <button v-for="b in c.tools" :key="b.icon" type="button" class="tool">
          <svg class="i20" viewBox="0 0 20 20" v-html="icons[b.icon]"></svg><span>{{ b.label }}</span><i v-if="b.caret" class="caret"></i>
        </button>
      </div>
      <div v-for="(p, i) in pads" :key="'p' + i" class="col pad" :class="[p.size, p.sep]">
        <template v-for="(k, j) in p.tools" :key="j">
          <button v-if="k" type="button" class="tool" :class="{ off: k === 'prisms' }" :aria-label="k">
            <svg class="i20" viewBox="0 0 20 20" v-html="icons[k]"></svg>
          </button>
          <span v-else class="tool"></span>
        </template>
      </div>
      <div v-for="(c, i) in colsModel" :key="'m' + i" class="col" :class="[c.size, c.sep]">
        <button v-for="(b, j) in c.tools" :key="j" type="button" class="tool" :class="{ off: b.off, on: b.on }" :aria-label="b.name">
          <svg v-if="b.icon" class="i20" viewBox="0 0 20 20" v-html="icons[b.icon]"></svg><span v-if="b.label">{{ b.label }}</span><i v-if="b.caret" class="caret"></i>
        </button>
      </div>
      <div class="col light w95 gridcol">
        <button type="button" class="tool on"><svg class="i20" viewBox="0 0 20 20" v-html="icons.grid"></svg><span>Grid</span></button>
        <span class="drop w80d"><select aria-label="Grid plane"><option>In Plane</option></select><i class="caret"></i></span>
      </div>
      <div class="col light w80 snapcol">
        <button v-for="s in snaps" :key="s[0]" type="button" :aria-label="s[0]" class="snap" :class="{ lit: s[1] }">
          <svg class="i20" viewBox="0 0 20 20" v-html="icons[s[0]]"></svg>
        </button>
      </div>
      <div class="col light w113 matcol">
        <span class="drop w98d"><select aria-label="Object type"><option>Model</option></select><i class="caret"></i></span>
        <span class="drop w98d"><select aria-label="Default material"><option>copper</option></select><i class="caret"></i></span>
        <button type="button" class="tool off"><svg class="i20" viewBox="0 0 20 20" v-html="icons.material"></svg><span>Material</span></button>
      </div>
      <div class="col light"></div>
    </section>

    <nav class="tabs">
      <button v-for="tb in tabs" :key="tb.label" type="button" :class="{ cur: tb.label === 'Draw', hot: tb.label === 'Automation' }" :style="{ width: tb.w + 'px' }">{{ tb.label }}</button>
    </nav>

    <main class="body">
      <aside class="dock">
        <section class="panel grow">
          <h2 class="phead"><span>Project Manager</span>
            <button type="button" aria-label="Pin"><svg viewBox="0 0 12 14"><path d="M3 2h6v6M3 2v6M1 8.500h10M6 9v4M8 2v6" /></svg></button>
            <button type="button" aria-label="Close"><svg viewBox="0 0 12 14"><path d="M2 3l8 8M10 3l-8 8" stroke-width="2" /></svg></button>
          </h2>
          <div class="treewrap">
            <ul class="tree small">
              <li v-for="(n, i) in project" :key="i">
                <span v-for="(g, k) in n.guides" :key="k" class="cell" :class="['g' + g, { own: k === n.guides.length - 1 }]">
                  <b v-if="n.box && k === n.guides.length - 1" class="box" :class="{ plus: n.box === '+' }"></b>
                </span>
                <svg class="i16" viewBox="0 0 16 16" v-html="icons[n.icon]"></svg>
                <span class="lab" :class="{ bold: n.bold, sel: n.sel }">{{ n.label }}</span>
              </li>
            </ul>
            <div class="scroll"><div class="thumb"></div></div>
          </div>
        </section>
        <div class="split"></div>
        <section class="panel propsp">
          <h2 class="phead"><span>Properties</span>
            <button type="button" aria-label="Pin"><svg viewBox="0 0 12 14"><path d="M3 2h6v6M3 2v6M1 8.500h10M6 9v4M8 2v6" /></svg></button>
            <button type="button" aria-label="Close"><svg viewBox="0 0 12 14"><path d="M2 3l8 8M10 3l-8 8" stroke-width="2" /></svg></button>
          </h2>
          <div class="pframe">
            <div class="pinner">
              <table>
                <colgroup><col class="c1" /><col class="c2" /><col class="c3" /><col class="c4" /><col /></colgroup>
                <thead><tr><th>Name</th><th>Value</th><th>Unit</th><th>Evaluated V...</th><th></th></tr></thead>
                <tbody>
                  <tr v-for="p in props" :key="p[0]!">
                    <td>{{ p[0] }}</td>
                    <td v-if="p[1] !== null">{{ p[1] }}</td>
                    <td v-else class="mid"><input type="checkbox" aria-label="Surface" /></td>
                    <td>{{ p[2] }}</td><td></td><td class="none"></td>
                  </tr>
                </tbody>
              </table>
            </div>
          </div>
        </section>
      </aside>
      <div class="vsplit"></div>

      <div class="right">
        <div class="mdi">
          <section v-for="v in views" :key="v.id" class="win" :class="'win-' + v.id">
            <h3 class="wtitle">
              <svg class="wicon" viewBox="0 0 19 15"><path d="M.5.5h18v14H.5z" fill="#fff" stroke="#8a8a8a" /><path d="M2 3h8v10H2z" fill="#3f8f8a" /><path d="M2 3h4v10H2z" fill="#4a7fae" /><path d="M16 3v6" stroke="#3fa060" stroke-width="2" /></svg>
              <span>{{ v.title }}</span>
            </h3>
            <div class="client">
              <ul class="tree pane">
                <li v-for="(n, i) in v.rows" :key="i">
                  <span v-for="(g, k) in n.guides" :key="k" class="cell" :class="['g' + g, { own: k === n.guides.length - 1 }]">
                    <b v-if="n.box && k === n.guides.length - 1" class="box" :class="{ plus: n.box === '+' }"></b>
                  </span>
                  <svg class="i16" viewBox="0 0 16 16" v-html="icons[n.icon]"></svg>
                  <span class="lab">{{ n.label }}</span>
                </li>
              </ul>
              <div class="plot">
                <svg class="canvas" role="img" :aria-label="v.title">
                  <defs>
                    <radialGradient :id="'hot' + v.id"><stop offset="0" stop-color="#ff2000" /><stop offset=".4" stop-color="#ff5000" stop-opacity=".9" /><stop offset="1" stop-color="#ffd000" stop-opacity="0" /></radialGradient>
                    <radialGradient :id="'yel' + v.id"><stop offset="0" stop-color="#f4f000" /><stop offset=".4" stop-color="#d0ff00" stop-opacity=".9" /><stop offset="1" stop-color="#20ff20" stop-opacity="0" /></radialGradient>
                    <radialGradient :id="'grn' + v.id"><stop offset="0" stop-color="#20ff10" /><stop offset=".5" stop-color="#20ff20" stop-opacity=".85" /><stop offset="1" stop-color="#10ff90" stop-opacity="0" /></radialGradient>
                  </defs>
                  <g :transform="`translate(${v.ox} ${v.oy})`">
                    <g shape-rendering="crispEdges" fill="none">
                      <path :d="gridPath(v, false)" stroke="#dcdaea" />
                      <path :d="gridPath(v, true)" stroke="#c4c2de" />
                      <path :d="`M${v.left} 0H2400`" stroke="#e89c9c" />
                      <path :d="`M0 ${Math.round(-v.up * v.pitch)}V${Math.round(v.down * v.pitch)}`" stroke="#94c094" />
                    </g>
                    <text class="axis gy" x="-1" y="-125">Y</text>

                    <g v-if="v.id === 'a'">
                      <rect x="-351" y="-112" width="702" height="112" fill="#00f" />
                      <defs>
                        <radialGradient id="fa" gradientUnits="userSpaceOnUse" cx="0" cy="0" r="1" gradientTransform="translate(747 325) scale(125 165)"><stop offset="0" stop-color="#00ff60" /><stop offset=".35" stop-color="#00fca0" /><stop offset=".6" stop-color="#00ecff" /><stop offset=".85" stop-color="#00a4ff" /><stop offset="1" stop-color="#0a80ff" /></radialGradient>
                      </defs>
                      <g transform="scale(.4975 .3333) translate(-747 -475)">
                        <path fill="url(#fa)" d="M613 305L620 290 630 262 648 228 652 208 680 192 708 177 745 171 785 174 825 207 855 243 866 290 872 305 854 307 856 380 850 446 642 446 638 380 640 307z" />
                        <ellipse cx="706" cy="295" rx="24" ry="52" fill="url(#grna)" /><ellipse cx="789" cy="290" rx="24" ry="50" fill="url(#grna)" />
                        <ellipse cx="708" cy="303" rx="11" ry="26" fill="url(#yela)" /><ellipse cx="786" cy="303" rx="11" ry="28" fill="url(#yela)" />
                        <path class="mesh" d="M652 222L720 210H825M768 247L798 242M785 278L845 263M690 343H853M638 379H856M720 325H795M655 208L667 222 680 307M668 190L665 225 688 255 720 210 708 177M720 210L730 173M720 210L745 280 748 172M745 280L783 212 757 173 748 212M783 212V174M783 212L798 242 825 207M798 242L785 278 768 247 745 280M825 210L845 263 866 300M845 263L855 243M845 263L853 307 825 210M798 242L826 307 845 263M688 255L708 283M688 255L672 378 642 320M672 378L710 307M625 265L640 305 667 222M642 440L672 379 708 446M672 379L690 343 710 379V446L722 410 745 379 755 446M690 343L700 310M690 343L725 310 733 343 710 379M733 343L745 379 752 343 733 310M752 343L770 379 790 343 775 310 752 343M790 343L795 379 812 343 800 310M812 343L830 379 853 343M830 343L826 307M722 410L735 446M722 410L710 379M745 379L778 412 770 379M778 412L760 446M778 412L795 446 795 379 815 446 830 379 843 379 850 446M795 379L835 440M735 360L725 310 745 325 755 310 770 325 785 310 795 325M710 310L733 325 752 343 770 325 790 343" />
                        <rect x="710" y="283" width="73" height="24" fill="#00f" />
                        <path d="M710 307V283H783V307" class="edge" />
                      </g>
                      <path class="edge" d="M-351-112H351V0H-351zM-351-56H351M-351-9H351" />
                    </g>

                    <g v-else-if="v.id === 'b'">
                      <rect x="-384" y="-136" width="769" height="136" fill="#1010ff" />
                      <defs>
                        <radialGradient id="fb" gradientUnits="userSpaceOnUse" cx="0" cy="0" r="1" gradientTransform="translate(782 600) scale(180 320)"><stop offset="0" stop-color="#10ff30" /><stop offset=".3" stop-color="#10ff40" /><stop offset=".5" stop-color="#10ffa8" /><stop offset=".64" stop-color="#10e8f4" /><stop offset=".82" stop-color="#14b0ff" /><stop offset="1" stop-color="#1880ff" /></radialGradient>
                      </defs>
                      <g transform="scale(.523 .3333) translate(-781 -691)">
                        <path fill="url(#fb)" d="M588 468L620 425 632 390 645 352 668 345 692 320 712 312 725 298 770 300 820 286 845 305 888 332 915 368 952 390 960 468 949 470 953 492 950 508 949 560 946 615 954 662H610L622 610 616 580 620 508 614 507 620 470z" />
                        <ellipse cx="740" cy="500" rx="48" ry="105" fill="url(#grnb)" /><ellipse cx="828" cy="500" rx="48" ry="110" fill="url(#grnb)" />
                        <ellipse cx="785" cy="535" rx="68" ry="72" fill="url(#yelb)" opacity=".8" />
                        <ellipse cx="738" cy="505" rx="24" ry="78" fill="url(#yelb)" /><ellipse cx="830" cy="515" rx="26" ry="82" fill="url(#yelb)" />
                        <ellipse cx="739" cy="512" rx="13" ry="28" fill="url(#hotb)" opacity=".9" /><ellipse cx="824" cy="502" rx="10" ry="30" fill="url(#hotb)" opacity=".6" />
                        <path d="M750 472h62l-18 9h-28z" fill="#18a8f0" />
                        <rect x="744" y="481" width="76" height="27" fill="#2020ea" stroke="#445a44" />
                      </g>
                      <path class="edge" d="M-384-136H385V0H-384zM-384-74H385M-384-61H385M-384-9H385" />
                    </g>

                    <g v-else>
                      <rect x="-478" y="-87" width="956" height="87" fill="#00f" />
                      <defs>
                        <linearGradient id="fc"><stop offset="0" stop-color="#1888ff" /><stop offset=".12" stop-color="#00d8ff" /><stop offset=".2" stop-color="#00ffa8" /><stop offset=".27" stop-color="#20ff20" /><stop offset=".36" stop-color="#b8ff00" /><stop offset=".5" stop-color="#e8f400" /><stop offset=".64" stop-color="#b8ff00" /><stop offset=".74" stop-color="#20ff20" /><stop offset=".82" stop-color="#00ffa8" /><stop offset=".9" stop-color="#00d8ff" /><stop offset="1" stop-color="#1888ff" /></linearGradient>
                      </defs>
                      <g transform="scale(.7015 .3333) translate(-716 -775)">
                        <path fill="url(#fc)" d="M624 551H808L806 600 809 640 808 741H624L622 650 628 590z" />
                        <ellipse cx="681" cy="645" rx="14" ry="56" fill="url(#hotc)" /><ellipse cx="753" cy="645" rx="14" ry="56" fill="url(#hotc)" />
                        <ellipse cx="681" cy="648" rx="9" ry="44" fill="url(#hotc)" /><ellipse cx="753" cy="645" rx="9" ry="44" fill="url(#hotc)" />
                        <path class="mesh" d="M624 595L660 592 683 589H750L770 585 808 597M622 640L645 632 672 645M765 630L790 625 808 655M634 688H665L695 703H760L785 695 808 694M630 551L642 640 634 688 626 735M630 551L640 592 657 551 662 600 683 551 700 589 716 551 733 589 750 551 752 620 775 551 770 585 795 551 800 597M640 592L624 620M640 592L642 640 662 600 672 645 683 589M662 600L655 640 634 688 655 741 665 688 642 640M665 688L683 741 695 703 706 741 722 703 738 741 745 703 753 741 768 703 785 741 790 650 808 741M700 589L690 628M700 589L716 628 733 589 745 628M690 628L683 589M683 661L695 703 708 661 722 703 735 661 745 703 752 661M672 645L665 688 680 661M770 585L765 630 775 655 760 703M775 655L790 625 800 597 775 610 765 630M775 655L795 650 808 640M683 551V628M752 551V628M750 661V741M662 551V688M655 640L672 660 690 690M750 620L775 645 755 690M738 661V741" />
                        <rect x="683" y="628" width="68" height="33" fill="#0000e8" />
                        <path class="edge" d="M683 628H751V661H683z" />
                      </g>
                      <path class="edge" d="M-478-87H478V0H-478zM-478-75H478M-478-11H478" />
                    </g>

                    <path d="M0-101L4-85H-4z" fill="#18b418" /><path d="M0-101L4-85H1z" fill="#0a6a0a" />
                    <path v-if="v.shaft" d="M4 0H88" stroke="#f00" stroke-width="2" />
                    <path d="M86-4L101 0 86 4z" fill="#e00000" />
                    <text class="axis gz" x="0" y="-1">Z</text>
                    <ellipse cx="0" cy="0" rx="4" ry="5" fill="#3558b8" /><circle cx="-1" cy="-1" r="2" fill="#6fa0f0" />

                    <rect :x="v.ruler[0]" :y="v.rulerY" :width="v.ruler[2] - v.ruler[0]" height="9" fill="#000" />
                    <rect :x="v.ruler[0] + 1" :y="v.rulerY + 1" :width="v.ruler[1] - v.ruler[0] - 1" height="7" fill="#808080" />
                    <text class="tick" text-anchor="middle" :x="v.ruler[0] - 1" :y="v.rulerY + 25">0</text>
                    <text class="tick" text-anchor="middle" :x="v.ruler[1] - 1" :y="v.rulerY + 25">1</text>
                    <text class="tick" :x="v.ruler[2] - 4" :y="v.rulerY + 25">2 (mm)</text>
                  </g>
                </svg>
                <div class="legend">
                  <div class="lname">E [V/m]</div>
                  <div class="lmax">Max: {{ v.max }}</div>
                  <div class="lbody">
                    <div class="bands"><i v-for="b in bands" :key="b" :style="{ background: b }"></i></div>
                    <div class="nums"><span v-for="s in v.scale" :key="s">{{ s }}</span></div>
                  </div>
                </div>
                <svg class="triad" viewBox="-65 -66 132 132">
                  <circle v-if="v.hover" r="60" fill="none" stroke="#f08a28" stroke-width="1.500" stroke-dasharray="6 5" />
                  <circle cy="-12" r="5" fill="#0a8a0a" /><circle cy="12" r="5" fill="#0a8a0a" />
                  <circle cx="-12" r="5" fill="#d80000" /><circle cx="12" r="5" fill="#d80000" /><circle cx="12" cy="-12" r="3" fill="#888" />
                  <path d="M-11-11H11V11H-11z" fill="#fff" stroke="#c4d4e4" />
                  <path d="M0-20V-32" stroke="#0a9a0a" stroke-width="3" /><path d="M0-44L3-30H-3z" fill="#0a8a0a" />
                  <path d="M20 0H34" stroke="#f00" stroke-width="3" /><path d="M41 0L30-3V3z" fill="#d00000" />
                  <text x="-9" y="-41" fill="#0a8a1a">Y</text><text x="-9" y="7" fill="#3c64d8">Z</text><text x="40" y="7" fill="#f00">X</text>
                </svg>
              </div>
            </div>
          </section>
          <div class="mdifoot"></div>
        </div>
        <div class="hsplit"></div>
        <div class="bottom">
          <section class="panel msg">
            <h2 class="phead"><span>Message Manager</span>
              <button type="button" aria-label="Pin"><svg viewBox="0 0 12 14"><path d="M3 2h6v6M3 2v6M1 8.500h10M6 9v4M8 2v6" /></svg></button>
              <button type="button" aria-label="Close"><svg viewBox="0 0 12 14"><path d="M2 3l8 8M10 3l-8 8" stroke-width="2" /></svg></button>
            </h2>
            <ul class="tree msgtree">
              <li><span class="cell gn own"><b class="box plus"></b></span><svg class="i16" viewBox="0 0 20 20" v-html="icons.app"></svg><span class="lab">*Global - Messages</span></li>
            </ul>
          </section>
          <div class="vsplit"></div>
          <section class="panel prog"><h2 class="phead"><span>Progress</span></h2></section>
        </div>
      </div>
    </main>
  </div>
</template>

<style>
html, body { height: 100%; overflow: hidden; }
.edge { fill: none; stroke: #41584a; stroke-width: 1; vector-effect: non-scaling-stroke; shape-rendering: crispEdges; }
.mesh { fill: none; stroke: #0a18c8; stroke-width: 1; vector-effect: non-scaling-stroke; }
</style>

<style scoped>
.shell { display: flex; flex-direction: column; height: 100vh; background: #f0f0f0; font: 13px/20px "Open Sans", "Noto Sans", sans-serif; color: #101018; overflow: hidden; }
button { border: 0; padding: 0; margin: 0; background: none; font: inherit; color: inherit; cursor: default; white-space: nowrap; }
ul { list-style: none; margin: 0; padding: 0; }
h2, h3 { margin: 0; font-weight: 400; }
.i20 { width: 20px; height: 20px; flex: none; display: block; }
.i16 { width: 16px; height: 16px; flex: none; display: block; }
.i34 { width: 34px; height: 34px; display: block; }

.titlebar { display: flex; align-items: center; gap: 7px; height: 29px; padding-left: 2px; background: #0078d7; color: #fff; font-size: 14px; flex: none; white-space: nowrap; }
.menubar { display: flex; gap: 19px; height: 25px; padding-left: 9px; background: #fff; font-size: 14px; flex: none; }
.menubar button { height: 25px; }

.ribbon { display: flex; height: 99px; border-top: 1px solid #cfcde0; border-bottom: 1px solid #cfcde0; background: #eeeef1; flex: none; overflow: hidden; }
.col, .big { position: relative; flex: none; padding-top: 5px; box-sizing: border-box; }
.light, .dark { padding-left: 12px; }
.light::before, .dark::before { content: ""; position: absolute; left: 0; width: 1px; background: #cfcde0; top: 2px; height: 93px; }
.dark::before { background: #8494ac; top: 10px; height: 79px; }
.w43 { width: 43px; } .w64 { width: 64px; } .w67 { width: 67px; } .w73 { width: 73px; } .w76 { width: 76px; } .w80 { width: 80px; }
.w83 { width: 83px; } .w86 { width: 86px; } .w95 { width: 95px; } .w98 { width: 98px; } .w111 { width: 111px; } .w113 { width: 113px; }
.w116 { width: 116px; } .w117 { width: 117px; } .w125 { width: 125px; } .w149 { width: 149px; }
.tool { display: flex; align-items: center; gap: 4px; height: 28px; }
.tool.off { color: #8e8e96; }
.tool.off svg { opacity: .6; }
.tool.on { background: #cbcbcb; margin-left: -4px; padding: 0 5px 0 4px; }
.caret { border: 3px solid transparent; border-top: 5px solid #6a6a6a; border-bottom: 0; margin-left: 2px; flex: none; }
.caret.wide { border-width: 7px 5px 0; margin: 5px auto 0; }
.pad { display: flex; flex-wrap: wrap; align-content: flex-start; column-gap: 13px; }
.pad .tool { width: 20px; }
.pad .tool:nth-child(5) { margin-right: 20px; }
.big button { display: flex; flex-direction: column; align-items: center; padding-top: 4px; width: 40px; }
.big button span { height: 20px; margin-top: 8px; }
.save { width: 67px; padding-left: 16px; }
.big.light { padding-left: 14px; }
.pick { display: flex; align-items: center; margin-left: -3px; height: 25px; }
.pick label { width: 41px; white-space: nowrap; }
.drop { position: relative; display: flex; align-items: center; height: 23px; border: 1px solid #d4d4de; }
.drop select { appearance: none; border: 0; background: transparent; font: inherit; color: inherit; width: 100%; height: 23px; padding: 0 0 0 2px; margin: 0; }
.drop .caret { position: absolute; right: 5px; top: 9px; }
.w92 { width: 92px; } .w80d { width: 78px; margin-left: -4px; } .w98d { width: 96px; margin-left: -4px; }
.gridcol .tool { width: 59px; }
.snapcol { display: flex; flex-wrap: wrap; align-content: flex-start; padding-left: 8px; padding-right: 6px; }
.snap { width: 33px; height: 28px; padding-left: 4px; }
.snap.lit { background: #cbcbcb; }

.tabs { display: flex; height: 28px; flex: none; color: #3c3c4c; }
.tabs button { position: relative; height: 29px; margin-top: -3px; box-sizing: border-box; }
.tabs .cur { background: #eeeef1; border: 1px solid #cfcde0; border-top: 0; color: #1f5c9c; }
.tabs .hot { background: #008cee; color: #0aa0ff; }

.body { flex: 1; display: flex; min-height: 0; }
.dock { width: 392px; flex: none; display: flex; flex-direction: column; }
.panel { display: flex; flex-direction: column; min-height: 0; min-width: 0; background: #fff; }
.grow { flex: 584 1 0; }
.propsp { flex: 554 1 0; background: #f0f0f0; }
.phead { display: flex; align-items: center; height: 28px; flex: none; padding: 0 7px 0 4px; border-bottom: 1px solid #a8a8ac; background: linear-gradient(#dadde2, #bdc0c6); font-size: 13px; box-sizing: border-box; }
.grow .phead { height: 29px; }
.phead span { flex: 1; }
.phead button { width: 12px; margin-left: 10px; height: 14px; }
.phead svg { width: 12px; height: 14px; display: block; }
.phead path { stroke: #6c6c70; fill: none; stroke-width: 1.5; }
.split, .hsplit, .vsplit, .mdifoot, .mdi { background-color: #868686; background-image: conic-gradient(#566078 25%, #8a8a8a 0 50%, #566078 0 75%, #8a8a8a 0); background-size: 4px 4px; }
.split { height: 6px; flex: none; }
.vsplit { width: 6px; flex: none; }
.hsplit { height: 7px; flex: none; }

.treewrap { flex: 1; display: flex; min-height: 0; overflow: hidden; }
.tree li { display: flex; align-items: center; height: 22px; font-size: 14px; white-space: nowrap; }
.small { flex: 1; padding-left: 22px; }
.small li { height: 20px; font-size: 12px; }
.cell { position: relative; width: 22px; height: 100%; flex: none; }
.cell::before { content: ""; position: absolute; left: 8px; top: 0; height: 100%; border-left: 1px dotted #6c6c6c; }
.gh::before { height: 50%; }
.gb::before { top: 50%; height: 50%; }
.gn::before { display: none; }
.own::after { content: ""; position: absolute; left: 9px; top: 50%; width: 12px; border-top: 1px dotted #6c6c6c; }
.box { position: absolute; left: 4px; top: 50%; width: 7px; height: 7px; margin-top: -4px; border: 1px solid #585858; background: linear-gradient(#000, #000) 1px 3px / 5px 1px no-repeat #fff; z-index: 1; }
.box.plus { background: linear-gradient(#000, #000) 1px 3px / 5px 1px no-repeat, linear-gradient(#000, #000) 3px 1px / 1px 5px no-repeat #fff; }
.lab { margin-left: 3px; padding: 0 2px; line-height: 20px; }
.bold { font-weight: 700; font-size: 13px; }
.sel { background: #f0f0f0; }
.scroll { width: 20px; background: #f0f0f0; padding: 119px 0 0 8px; box-sizing: border-box; }
.thumb { width: 3px; height: 220px; border-radius: 2px; background: #868686; }

.pframe { flex: 1; margin: 5px 5px 0 6px; border: 1px solid #8a94b0; border-bottom: 0; background: #fff; padding: 3px 3px 2px 1px; min-height: 0; }
.pinner { height: 100%; box-sizing: border-box; border: 1px solid #dcdcdc; border-left: 2px solid #8a8a8a; border-top: 2px solid #7a7a7a; }
table { border-collapse: collapse; table-layout: fixed; width: 100%; font: 13px/20px "Liberation Sans", Arial, sans-serif; }
.c1 { width: 63px; } .c2 { width: 164px; } .c3 { width: 44px; } .c4 { width: 88px; }
th { background: #f0f0f0; font-weight: 400; height: 21px; padding: 0; border-right: 1px solid #808080; border-bottom: 1px solid #808080; white-space: nowrap; }
td { height: 22px; padding: 0 0 0 2px; border-right: 1px solid #b8b8b8; border-bottom: 1px solid #b8b8b8; white-space: nowrap; line-height: 20px; }
td.none { border: 0; }
td input { appearance: none; display: block; width: 16px; height: 16px; margin: 3px auto 0; border: 1px solid #e0e0e0; border-left: 2px solid #707070; border-top: 2px solid #707070; background: #fff; box-sizing: border-box; }

.right { flex: 1; min-width: 0; display: flex; flex-direction: column; }
.mdi { flex: 1; min-height: 0; display: grid; grid-template: minmax(0, 288fr) minmax(0, 373fr) minmax(0, 368fr) 6px / minmax(0, 1fr); border-top: 2px solid #c4c4c4; border-left: 2px solid #fff; border-bottom: 1px solid #fff; padding-top: 2px; }
.win { display: flex; flex-direction: column; min-height: 0; min-width: 0; box-sizing: border-box; background: #d7e4f2; border-bottom: 1px solid #3c3c44; color: #97999f; padding-bottom: 9px; }
.win-a { margin-left: 2px; padding-left: 9px; box-shadow: inset 1px 1px #48484c; border-top-left-radius: 4px; }
.win-b { padding-left: 5px; color: #14141c; background: #b9d1ea; border-bottom: 1px solid #101010; box-shadow: inset 0 -1px #28c8e8; }
.win-c { padding-left: 1px; }
.wtitle { display: flex; align-items: center; gap: 6px; height: 36px; flex: none; margin: 1px 0 0 -8px; padding: 8px 0 0 10px; box-sizing: border-box; font-size: 14px; white-space: nowrap; background: linear-gradient(#c0cedc, #d7e4f2); }
.win-b .wtitle { background: linear-gradient(#9ab3d2, #b9d1ea); margin-left: -5px; padding-left: 7px; }
.win-c .wtitle { margin-left: -1px; padding-left: 3px; }
.wicon { width: 19px; height: 15px; flex: none; }
.client { flex: 1; display: flex; gap: 4px; min-height: 0; background: #f0f0f0; color: #101018; }
.pane, .plot { background: #fff; border: 2px solid #767676; border-right: 1px solid #e8e8e8; border-bottom: 1px solid #e8e8e8; box-sizing: border-box; overflow: hidden; }
.pane { width: 291px; flex: none; }
.plot { flex: 1; position: relative; min-width: 0; border-right: 0; }
.canvas { display: block; width: 100%; height: 100%; }
.axis { font: 23px "Liberation Sans", Arial, sans-serif; }
.gy { fill: #0a8a0a; }
.gz { fill: #4a70d8; font-size: 21px; }
.tick { font: 13px "Liberation Sans", Arial, sans-serif; fill: #000; }
.legend { position: absolute; left: 6px; top: 7px; width: 140px; border: 1px solid #000; background: #fff; font: 18px/24px "Liberation Sans", Arial, sans-serif; color: #000; }
.lname { height: 37px; line-height: 37px; padding-left: 4px; font-size: 20px; font-weight: 700; border-bottom: 1px solid #000; }
.lmax { height: 23px; line-height: 23px; padding-left: 4px; border-bottom: 1px solid #000; white-space: nowrap; }
.lbody { display: flex; height: 299px; }
.bands { width: 39px; height: 272px; margin: 14px 0 0 5px; display: flex; flex-direction: column; }
.bands i { flex: 1; }
.nums { flex: 1; display: flex; flex-direction: column; }
.nums span { flex: 1; display: flex; align-items: center; justify-content: center; }
.triad { position: absolute; left: 0; bottom: 0; width: 132px; height: 132px; }
.triad text { font: bold 16px "Liberation Sans", Arial, sans-serif; }

.bottom { display: flex; height: 97px; flex: none; }
.bottom .phead { height: 29px; }
.msg { flex: 1236 1 0; }
.prog { flex: 437 1 0; }
.msgtree li { height: 18px; font: 13px/18px "Liberation Sans", Arial, sans-serif; }
.msgtree .lab { background: #e2e2e2; line-height: 18px; padding: 0 3px; margin-left: 2px; }
</style>
